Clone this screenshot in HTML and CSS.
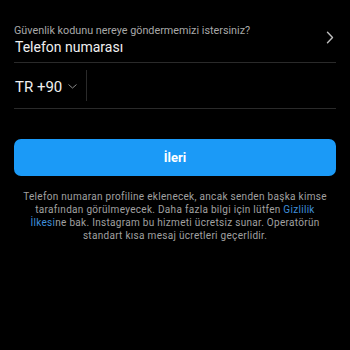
FILE: index.html
```html
<!DOCTYPE html>
<html lang="tr">
<head>
<meta charset="utf-8">
<link rel="stylesheet" href="styles.css">
</head>
<body>
<div class="page">
  <div class="method-row">
    <div class="method-text">
      <div class="method-label">Güvenlik kodunu nereye göndermemizi istersiniz?</div>
      <div class="method-value">Telefon numarası</div>
    </div>
    <svg class="chev-right" width="8" height="13" viewBox="0 0 8 13"><path d="M1.5 1.2 L6.5 6.5 L1.5 11.8" fill="none" stroke="#bdbdbd" stroke-width="1.4" stroke-linecap="round" stroke-linejoin="round"/></svg>
  </div>
  <div class="phone-row">
    <div class="country">TR +90</div>
    <svg class="chev-down" width="9" height="5" viewBox="0 0 9 5"><path d="M0.8 0.8 L4.5 4 L8.2 0.8" fill="none" stroke="#8a8a8a" stroke-width="1" stroke-linecap="round" stroke-linejoin="round"/></svg>
    <div class="vsep"></div>
    <div class="phone-input"></div>
  </div>
  <button class="next">İleri</button>
  <p class="note">Telefon numaran profiline eklenecek, ancak senden başka kimse tarafından görülmeyecek. Daha fazla bilgi için lütfen <span class="link">Gizlilik</span> <span class="link">İlkesi</span>ne bak. Instagram bu hizmeti ücretsiz sunar. Operatörün standart kısa mesaj ücretleri geçerlidir.</p>
</div>
</body>
</html>
```
FILE: styles.css
```css
html, body {
  margin: 0;
  padding: 0;
  background: #000;
}
body {
  font-family: "Roboto", "Liberation Sans", sans-serif;
  color: #fff;
}
.page {
  padding: 24px 14px 0;
}
.method-row {
  display: flex;
  align-items: center;
  justify-content: space-between;
  padding-bottom: 6px;
  border-bottom: 1px solid #2a2a2a;
}
.method-label {
  font-size: 10.8px;
  line-height: 14px;
  color: #a8a8a8;
}
.method-value {
  font-size: 14px;
  line-height: 18px;
  color: #f0f0f0;
  margin-left: 1px;
}
.chev-right {
  margin-right: 2px;
  margin-top: -5px;
}
.phone-row {
  display: flex;
  align-items: center;
  height: 45px;
  border-bottom: 1px solid #2a2a2a;
}
.country {
  font-size: 15px;
  line-height: 20px;
  color: #f0f0f0;
  margin-top: 2px;
  margin-left: 1px;
}
.chev-down {
  margin-left: 6px;
  margin-top: 2px;
}
.vsep {
  width: 1px;
  height: 31px;
  background: #2a2a2a;
  margin-left: 9px;
}
.phone-input {
  flex: 1;
}
.next {
  display: block;
  width: 100%;
  height: 37px;
  margin-top: 30px;
  border: none;
  border-radius: 7px;
  background: #1b9af7;
  color: #fff;
  font-family: inherit;
  font-size: 13px;
  font-weight: 700;
}
.note {
  margin: 14px 6px 0;
  text-align: center;
  font-size: 10px;
  line-height: 13px;
  letter-spacing: 0.3px;
  color: #a0a0a0;
}
.link {
  color: #3f8fdb;
}
```
